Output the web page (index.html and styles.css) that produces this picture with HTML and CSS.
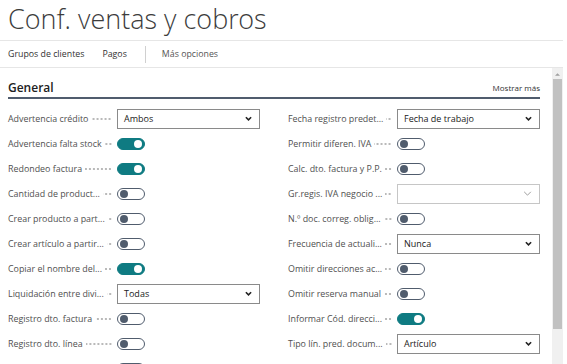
FILE: index.html
```html
<!DOCTYPE html>
<html lang="es">
<head>
    <meta charset="UTF-8">
    <title>Conf. ventas y cobros</title>
    <link rel="stylesheet" href="styles.css">
</head>
<body>
    <header class="page-title">Conf. ventas y cobros</header>
    <nav class="actions">
        <span class="action">Grupos de clientes</span>
        <span class="action">Pagos</span>
        <span class="action-sep"></span>
        <span class="action more">Más opciones</span>
    </nav>
    <div class="scroll-area">
        <main class="content">
            <div class="section-head">
                <span class="section-title">General</span>
                <span class="show-more">Mostrar más</span>
            </div>
            <div class="fields">
                <div class="field"><span class="label"><span class="text">Advertencia crédito</span><span class="leader"></span></span>
                    <div class="select"><span>Ambos</span><svg viewBox="0 0 8 5"><polyline points="1,1 4,4 7,1"/></svg></div></div>
                <div class="field"><span class="label"><span class="text">Fecha registro predet...</span><span class="leader"></span></span>
                    <div class="select"><span>Fecha de trabajo</span><svg viewBox="0 0 8 5"><polyline points="1,1 4,4 7,1"/></svg></div></div>

                <div class="field"><span class="label"><span class="text">Advertencia falta stock</span><span class="leader"></span></span>
                    <span class="toggle on"></span></div>
                <div class="field"><span class="label"><span class="text">Permitir diferen. IVA</span><span class="leader"></span></span>
                    <span class="toggle"></span></div>

                <div class="field"><span class="label"><span class="text">Redondeo factura</span><span class="leader"></span></span>
                    <span class="toggle on"></span></div>
                <div class="field"><span class="label"><span class="text">Calc. dto. factura y P.P.</span><span class="leader"></span></span>
                    <span class="toggle"></span></div>

                <div class="field"><span class="label"><span class="text">Cantidad de product...</span><span class="leader"></span></span>
                    <span class="toggle"></span></div>
                <div class="field"><span class="label"><span class="text">Gr.regis. IVA negocio ...</span><span class="leader"></span></span>
                    <div class="select lookup"><span></span><svg viewBox="0 0 10 6"><polyline points="1,1 5,5 9,1"/></svg></div></div>

                <div class="field"><span class="label"><span class="text">Crear producto a part...</span><span class="leader"></span></span>
                    <span class="toggle"></span></div>
                <div class="field"><span class="label"><span class="text">N.º doc. correg. oblig...</span><span class="leader"></span></span>
                    <span class="toggle"></span></div>

                <div class="field"><span class="label"><span class="text">Crear artículo a partir...</span><span class="leader"></span></span>
                    <span class="toggle"></span></div>
                <div class="field"><span class="label"><span class="text">Frecuencia de actuali...</span><span class="leader"></span></span>
                    <div class="select"><span>Nunca</span><svg viewBox="0 0 8 5"><polyline points="1,1 4,4 7,1"/></svg></div></div>

                <div class="field"><span class="label"><span class="text">Copiar el nombre del...</span><span class="leader"></span></span>
                    <span class="toggle on"></span></div>
                <div class="field"><span class="label"><span class="text">Omitir direcciones ac...</span><span class="leader"></span></span>
                    <span class="toggle"></span></div>

                <div class="field"><span class="label"><span class="text">Liquidación entre divi...</span><span class="leader"></span></span>
                    <div class="select"><span>Todas</span><svg viewBox="0 0 8 5"><polyline points="1,1 4,4 7,1"/></svg></div></div>
                <div class="field"><span class="label"><span class="text">Omitir reserva manual</span><span class="leader"></span></span>
                    <span class="toggle"></span></div>

                <div class="field"><span class="label"><span class="text">Registro dto. factura</span><span class="leader"></span></span>
                    <span class="toggle"></span></div>
                <div class="field"><span class="label"><span class="text">Informar Cód. direcci...</span><span class="leader"></span></span>
                    <span class="toggle on"></span></div>

                <div class="field"><span class="label"><span class="text">Registro dto. línea</span><span class="leader"></span></span>
                    <span class="toggle"></span></div>
                <div class="field"><span class="label"><span class="text">Tipo lín. pred. docum...</span><span class="leader"></span></span>
                    <div class="select"><span>Artículo</span><svg viewBox="0 0 8 5"><polyline points="1,1 4,4 7,1"/></svg></div></div>

                <div class="field"><span class="label"></span>
                    <span class="toggle"></span></div>
                <div class="field"></div>
            </div>
        </main>
        <div class="scrollbar">
            <div class="scroll-arrow"><svg viewBox="0 0 6 4"><polygon points="0,4 3,1 6,4"/></svg></div>
            <div class="scroll-thumb"></div>
        </div>
    </div>
</body>
</html>
```

FILE: styles.css
```css
body,html{
    padding: 0;
    margin: 0;
    background-color: #fff;
    height: 100%;
    overflow: hidden;
}
body{
    font-family: "Open Sans", "Noto Sans", sans-serif;
    color: #212121;
    margin-right: 4px;
}
.page-title{
    font-family: "Open Sans Light", "Open Sans", sans-serif;
    font-size: 27px;
    font-weight: 300;
    line-height: 37px;
    padding: 0 8px 3px;
    color: #3c3c3c;
    border-bottom: 1px solid #e6e6e6;
}
.actions{
    display: flex;
    align-items: center;
    height: 26px;
    padding: 0 8px;
    font-size: 8.8px;
    border-bottom: 1px solid #e6e6e6;
}
.action{
    margin-right: 18px;
    color: #333;
}
.action.more{
    color: #555;
}
.action-sep{
    width: 1px;
    height: 17px;
    background-color: #d0d0d0;
    margin-right: 16px;
}
.scroll-area{
    display: flex;
    height: 297px;
}
.content{
    flex: 1;
    overflow: hidden;
}
.section-head{
    display: flex;
    align-items: center;
    justify-content: space-between;
    margin: 0 12px 0 8px;
    padding: 10px 0 1px;
    height: 18px;
    border-bottom: 2px solid #505c6d;
}
.section-title{
    font-size: 12px;
    font-weight: 600;
}
.show-more{
    font-size: 8px;
    color: #333;
}
.fields{
    display: grid;
    grid-template-columns: 280px 272px;
    grid-auto-rows: 25px;
    padding-top: 7px;
}
.field{
    display: flex;
    align-items: center;
    padding-left: 8px;
}
.label{
    display: flex;
    align-items: center;
    width: 104px;
    margin-right: 5px;
    font-size: 8.9px;
    color: #505050;
    white-space: nowrap;
}
.label .text{
    flex-shrink: 0;
}
.leader{
    flex: 1;
    min-width: 0;
    height: 4px;
    margin-left: 3px;
    background-image: radial-gradient(circle, #b8b8b8 0.7px, transparent 1px);
    background-size: 4px 4px;
    background-repeat: repeat-x;
    background-position: right center;
}
.select{
    display: flex;
    align-items: center;
    justify-content: space-between;
    box-sizing: border-box;
    width: 143px;
    height: 20px;
    padding: 0 7px 0 6px;
    border: 1px solid #8a8a8a;
    font-size: 9px;
    color: #212121;
}
.select svg{
    width: 7px;
    height: 5px;
    fill: none;
    stroke: #212121;
    stroke-width: 1.8;
}
.select.lookup{
    border-color: #c6c6c6;
}
.select.lookup svg{
    width: 9px;
    height: 5px;
    stroke: #8a8a8a;
    stroke-width: 1;
}
.toggle{
    position: relative;
    box-sizing: border-box;
    width: 28px;
    height: 12px;
    border: 1px solid #505c6d;
    border-radius: 6px;
    background-color: #fff;
}
.toggle::after{
    content: "";
    position: absolute;
    top: 1px;
    left: 2px;
    width: 8px;
    height: 8px;
    border-radius: 50%;
    background-color: #505c6d;
}
.toggle.on{
    background-color: #0f7b82;
    border-color: #0f7b82;
}
.toggle.on::after{
    left: auto;
    right: 2px;
    background-color: #fff;
}
.scrollbar{
    width: 11px;
    background-color: #f0f0f0;
    display: flex;
    flex-direction: column;
    align-items: center;
}
.scroll-arrow{
    height: 11px;
    display: flex;
    align-items: center;
}
.scroll-arrow svg{
    width: 5px;
    height: 4px;
    fill: #a0a0a0;
}
.scroll-thumb{
    width: 9px;
    height: 250px;
    background-color: #c1c1c1;
}
```
